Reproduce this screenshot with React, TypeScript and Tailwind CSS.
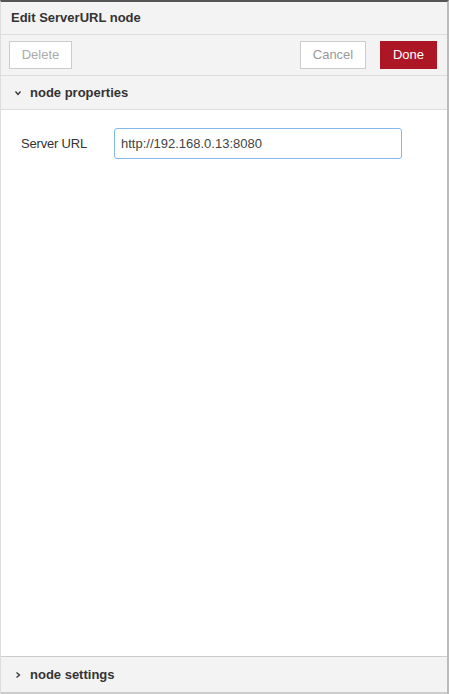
import React from "react";

function Chevron({ down }: { down?: boolean }) {
  return (
    <svg width="8" height="8" viewBox="0 0 8 8" className={down ? "rotate-90" : ""}>
      <path d="M2.5 1.5 L5.5 4 L2.5 6.5" fill="none" stroke="#333" strokeWidth="1.3" />
    </svg>
  );
}

export default function App() {
  return (
    <div
      className="w-[449px] h-[694px] bg-white flex flex-col border-t-2 border-t-[#555] border-l border-l-[#ddd] border-r-2 border-r-[#bbb] overflow-hidden"
      style={{ fontFamily: '"Liberation Sans", Arial, sans-serif' }}
    >
      <div className="h-[33px] shrink-0 bg-[#f3f3f3] border-b border-[#ddd] flex items-center pl-[10px] text-[13px] font-bold text-[#333]">
        Edit ServerURL node
      </div>
      <div className="h-[41px] shrink-0 bg-[#f3f3f3] border-b border-[#ddd] flex items-center pl-[8px] pr-[10px] gap-[14px]">
        <button className="h-[28px] w-[63px] bg-white border border-[#ccc] text-[13px] text-[#aaa]">
          Delete
        </button>
        <div className="flex-1" />
        <button className="h-[28px] w-[66px] bg-white border border-[#ccc] text-[13px] text-[#999]">
          Cancel
        </button>
        <button className="h-[28px] w-[57px] bg-[#ad1625] border border-[#ad1625] text-[13px] text-white">
          Done
        </button>
      </div>
      <div className="h-[34px] shrink-0 bg-[#f3f3f3] border-b border-[#ddd] flex items-center pl-[13px] gap-[8px] text-[13px] font-bold text-[#333]">
        <Chevron down />
        node properties
      </div>
      <div className="flex-1 bg-white pt-[18px] pl-[20px]">
        <div className="flex items-center">
          <label className="w-[93px] text-[13px] text-[#333] tracking-[-0.2px]">Server URL</label>
          <input
            readOnly
            value="http://192.168.0.13:8080"
            className="w-[288px] h-[31px] border border-[#85b7ef] rounded-[3px] px-[6px] text-[13px] text-[#444] outline-none"
            style={{ fontFamily: '"Liberation Sans", Arial, sans-serif' }}
          />
        </div>
      </div>
      <div className="h-[38px] shrink-0 bg-[#f3f3f3] border-t border-[#ccc] border-b-2 border-b-[#ccc] flex items-center pl-[13px] gap-[8px] text-[13px] font-bold text-[#333]">
        <Chevron />
        node settings
      </div>
    </div>
  );
}
